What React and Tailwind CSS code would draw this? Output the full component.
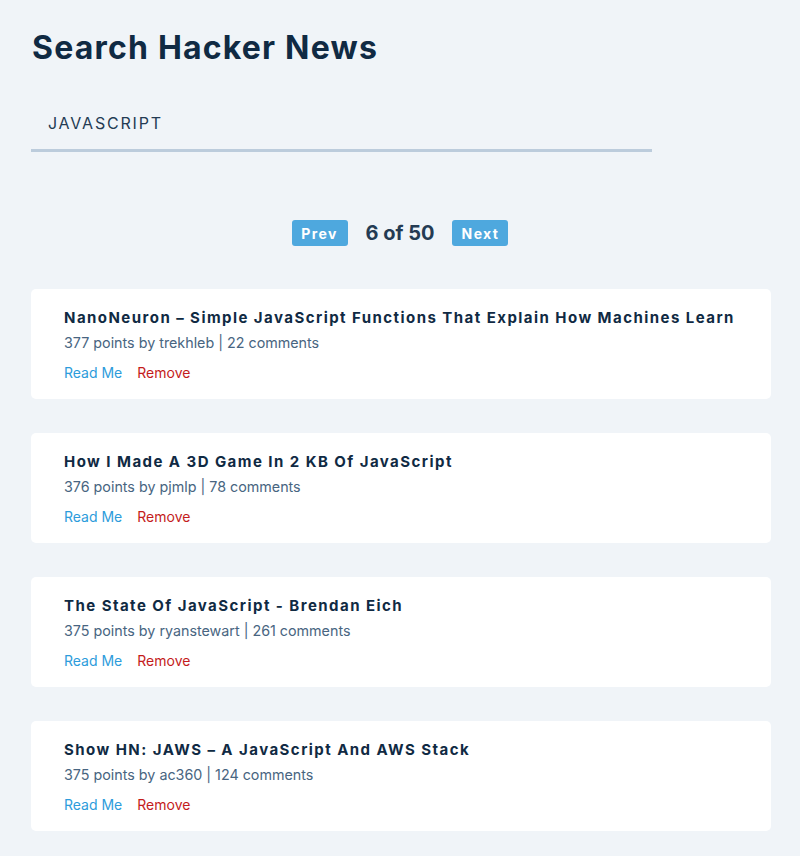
import React from "react";

const stories = [
  {
    id: 1,
    title: "NanoNeuron – Simple JavaScript Functions That Explain How Machines Learn",
    points: 377,
    author: "trekhleb",
    comments: 22,
  },
  {
    id: 2,
    title: "How I Made A 3D Game In 2 KB Of JavaScript",
    points: 376,
    author: "pjmlp",
    comments: 78,
  },
  {
    id: 3,
    title: "The State Of JavaScript - Brendan Eich",
    points: 375,
    author: "ryanstewart",
    comments: 261,
  },
  {
    id: 4,
    title: "Show HN: JAWS – A JavaScript And AWS Stack",
    points: 375,
    author: "ac360",
    comments: 124,
  },
];

function Story({ story }) {
  return (
    <div className="bg-white rounded-[5px] h-[110px] pl-[33px] pr-4 pt-[18px]">
      <h3 className="text-[15px] leading-[22px] font-bold tracking-[1.45px] text-[#102a43]">
        {story.title}
      </h3>
      <p className="mt-[3px] text-[14.3px] leading-[22px] text-[#486581]">
        {story.points} points by {story.author} | {story.comments} comments
      </p>
      <div className="mt-[9px] flex gap-[15px] text-[14px] leading-[20px]">
        <a href="#" className="text-[#2d9cdb]">Read Me</a>
        <a href="#" className="text-[#c41c1c]">Remove</a>
      </div>
    </div>
  );
}

export default function App() {
  return (
    <div className="min-h-[856px] bg-[#f0f4f8] font-['Inter',sans-serif] px-[31px] pt-[29px] pb-6">
      <h1 className="text-[32px] leading-[38px] font-bold tracking-[1.2px] text-[#102a43] pl-[1px]">
        Search Hacker News
      </h1>
      <div className="mt-[30px] w-[621px] border-b-[3px] border-[#bcccdc] h-[55px] flex items-center pl-[17px]">
        <input
          className="w-full bg-transparent outline-none text-[16px] tracking-[1.8px] text-[#243b53]"
          defaultValue="JAVASCRIPT"
        />
      </div>
      <div className="mt-[66px] flex items-center justify-center gap-[18px]">
        <button className="w-[56px] h-[26px] rounded-[3px] bg-[#4ea8de] text-white text-[14px] font-bold tracking-[1.4px]">
          Prev
        </button>
        <span className="text-[20px] font-bold text-[#243b53]">6 of 50</span>
        <button className="w-[56px] h-[26px] rounded-[3px] bg-[#4ea8de] text-white text-[14px] font-bold tracking-[1.4px]">
          Next
        </button>
      </div>
      <div className="mt-[41px] w-[740px] flex flex-col gap-[34px]">
        {stories.map((s) => (
          <Story key={s.id} story={s} />
        ))}
      </div>
    </div>
  );
}
